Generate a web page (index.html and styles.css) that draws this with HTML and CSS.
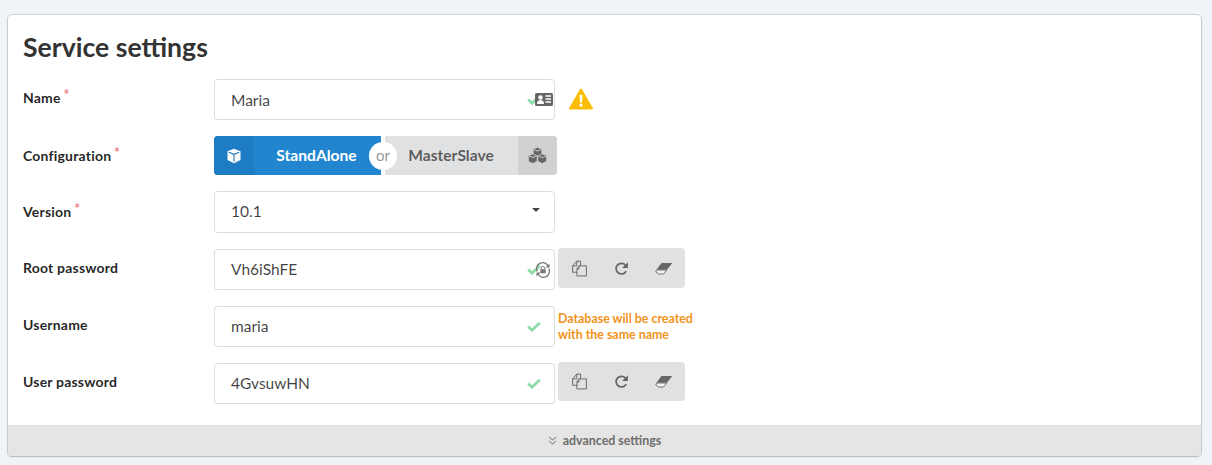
FILE: index.html
```html
<!DOCTYPE html>
<html lang="en">
<head>
<meta charset="utf-8">
<title>Service settings</title>
<link rel="stylesheet" href="styles.css">
</head>
<body>
<svg class="defs" width="0" height="0" aria-hidden="true">
  <symbol id="check" viewBox="0 0 14 11"><path d="M1.200 5.600 5 9.200 12.800 1.800" fill="none" stroke="currentColor" stroke-width="2.800"/></symbol>
  <symbol id="copy" viewBox="0 0 16 16"><path d="M5.500 9.500v-1l2-3h3.500l3.500 0v9.500h-9v-5.500zM7.500 5.500v3h-2M6 11.500h-4.500v-6l4-4.500h3.500v4.500M5.500 1v4.500h-4" fill="none" stroke="currentColor" stroke-width=".9" stroke-linejoin="round"/></symbol>
  <symbol id="redo" viewBox="0 0 16 16"><path d="M13 10.800A5.700 5.700 0 1 1 12.200 4.300" fill="none" stroke="currentColor" stroke-width="1.900"/><path d="M14.800 1.200v6.200h-6.200z" fill="currentColor"/></symbol>
  <symbol id="eraser" viewBox="0 0 18 13"><path d="M6.500 1H17.200l-5.200 6.800H1.500z" fill="currentColor"/><path d="M1.500 8h10.300L8.500 12H3.800L.8 10z" fill="#f4f4f4" stroke="currentColor" stroke-width=".9"/></symbol>
</svg>
<main class="card">
  <h1 class="title">Service settings</h1>
  <form class="form">
    <div class="row row-41">
      <label class="label">Name <sup class="req">*</sup></label>
      <div class="input">
        <span class="value">Maria</span>
        <svg class="check check-near"><use href="#check"/></svg>
        <svg class="idcard" viewBox="0 0 18 13"><rect width="18" height="13" rx="1.500" fill="#666"/><circle cx="5.500" cy="4.500" r="2.200" fill="#fff"/><path d="M2 11c0-3 1.500-4 3.500-4S9 8 9 11z" fill="#fff"/><path d="M10.500 3H16M10.500 6H16M10.500 9H16" stroke="#fff" stroke-width="1.300"/></svg>
      </div>
      <svg class="warn" viewBox="0 0 24 22"><path d="M12 1.500 23 20.500H1z" fill="#fbbd08" stroke="#fbbd08" stroke-width="2" stroke-linejoin="round"/><path d="M10.600 7h2.800l-.4 7.500h-2z" fill="#fff"/><rect x="10.600" y="15.800" width="2.800" height="2.800" fill="#fff"/></svg>
    </div>
    <div class="row row-39">
      <label class="label">Configuration <sup class="req">*</sup></label>
      <div class="toggle">
        <div class="opt opt-on">
          <span class="opt-icon opt-icon-on">
            <svg class="cube" viewBox="0 0 16 16"><path d="M8 .8 14.500 3.300v8.800L8 15.200 1.500 12.100V3.300z" fill="#fff"/><path d="M2.800 4.200 8 6.300l5.200-2.100M8 6.300v7.500" fill="none" stroke="#1a77bd" stroke-width="1.100"/></svg>
          </span>
          <span class="opt-text">StandAlone</span>
        </div>
        <span class="or">or</span>
        <div class="opt opt-off">
          <span class="opt-text">MasterSlave</span>
          <span class="opt-icon opt-icon-off">
            <svg class="cubes" viewBox="0 0 20 18"><g fill="#666" stroke="#d0d1d2" stroke-width=".6" stroke-linejoin="round"><path d="M10 .6 14.500 2.200v5.600L10 9.600 5.500 7.800V2.200z"/><path d="M5 7.400 9.500 9.200v6L5 17.400.5 15.200v-6z"/><path d="M15 7.400 19.500 9.200v6L15 17.400 10.500 15.200v-6z"/></g><path d="M5.800 2.600 10 4.300l4.200-1.700M1 9.500 5 11.200l4-1.700M11 9.500 15 11.200l4-1.700" fill="none" stroke="#d0d1d2" stroke-width="1"/></svg>
          </span>
        </div>
      </div>
    </div>
    <div class="row row-42">
      <label class="label">Version <sup class="req">*</sup></label>
      <div class="input input-up">
        <span class="value">10.1</span>
        <span class="caret"></span>
      </div>
    </div>
    <div class="row row-41">
      <label class="label">Root password</label>
      <div class="input input-up">
        <span class="value">Vh6iShFE</span>
        <svg class="check check-near"><use href="#check"/></svg>
        <svg class="lockspin" viewBox="0 0 16 16"><path d="M2.200 9.500A6 6 0 0 1 13 4" fill="none" stroke="#777" stroke-width="1.300"/><path d="M13.800 6.500A6 6 0 0 1 3 12" fill="none" stroke="#777" stroke-width="1.300"/><path d="M14.500 1.500v4h-4zM1.500 14.500v-4h4z" fill="#777"/><path d="M6.200 7.500V6.300a1.800 1.800 0 0 1 3.600 0v1.200" fill="none" stroke="#777" stroke-width="1"/><rect x="5.300" y="7.300" width="5.400" height="4" rx=".6" fill="#777"/></svg>
      </div>
      <div class="tools tools-40">
        <button class="tool" type="button"><svg class="ic-copy"><use href="#copy"/></svg></button>
        <button class="tool" type="button"><svg class="ic-redo"><use href="#redo"/></svg></button>
        <button class="tool" type="button"><svg class="ic-eraser"><use href="#eraser"/></svg></button>
      </div>
    </div>
    <div class="row row-41">
      <label class="label">Username</label>
      <div class="input input-up">
        <span class="value">maria</span>
        <svg class="check"><use href="#check"/></svg>
      </div>
      <p class="hint">Database will be created<br>with the same name</p>
    </div>
    <div class="row row-41">
      <label class="label">User password</label>
      <div class="input input-up">
        <span class="value">4GvsuwHN</span>
        <svg class="check"><use href="#check"/></svg>
      </div>
      <div class="tools tools-39">
        <button class="tool" type="button"><svg class="ic-copy"><use href="#copy"/></svg></button>
        <button class="tool" type="button"><svg class="ic-redo"><use href="#redo"/></svg></button>
        <button class="tool" type="button"><svg class="ic-eraser"><use href="#eraser"/></svg></button>
      </div>
    </div>
  </form>
  <footer class="advanced">
    <svg class="dbl" viewBox="0 0 9 9"><path d="M1 1l3.500 3L8 1M1 5l3.500 3L8 5" fill="none" stroke="#999" stroke-width="1.200"/></svg>
    <span>advanced settings</span>
  </footer>
</main>
</body>
</html>
```
FILE: styles.css
```css
* { box-sizing: border-box; }
html, body { height: 100%; }
body {
  margin: 0;
  padding: 15px 11px 8px 8px;
  background: #f0f4f8;
  font-family: Lato, "Open Sans", sans-serif;
  color: rgba(0, 0, 0, .87);
  overflow: hidden;
}
.defs { position: absolute; }
.card {
  height: 441px;
  background: #fff;
  border-radius: 4px;
  box-shadow: 0 0 0 1px rgba(34, 36, 38, .15), 0 1px 2px rgba(34, 36, 38, .15);
  overflow: hidden;
  display: flex;
  flex-direction: column;
}
.title {
  margin: 0;
  padding: 16px 0 0 15px;
  height: 64px;
  font-size: 26.600px;
  line-height: 32px;
  font-weight: 700;
  color: #333;
}
.form {
  flex: 1;
  padding-left: 15px;
  display: flex;
  flex-direction: column;
  gap: 16px;
}
.row { display: flex; align-items: center; }
.row-41 { height: 41px; }
.row-39 { height: 39px; }
.row-42 { height: 42px; }
.label {
  width: 191px;
  flex: none;
  padding-bottom: 4px;
  font-size: 14px;
  letter-spacing: .2px;
  font-weight: 700;
  color: rgba(0, 0, 0, .87);
}
.row-39 .label { padding-bottom: 0; }
.row-42 .label { padding-bottom: 2px; }
.req {
  color: #e4686a;
  font-size: 15px;
  font-weight: 400;
  line-height: 0;
  vertical-align: 3px;
  margin-left: -1px;
}
.input {
  width: 341px;
  height: 100%;
  flex: none;
  display: flex;
  align-items: center;
  padding: 0 1px 0 16px;
  border: 1px solid rgba(34, 36, 38, .15);
  border-radius: 4px;
  background: #fff;
}
.value {
  flex: 1;
  font-size: 15.500px;
  color: rgba(0, 0, 0, .75);
}
.input-up .value { padding-bottom: 2px; }
.check { width: 14px; height: 11px; margin-right: 12px; color: #8cdba8; flex: none; }
.check-near { margin-right: -6px; }
.idcard { width: 18px; height: 13px; flex: none; margin-right: 0; }
.lockspin { width: 16px; height: 16px; flex: none; margin-right: 2px; }
.warn { width: 24px; height: 22px; margin: -2px 0 0 14px; flex: none; }
.caret {
  width: 0;
  height: 0;
  margin: 0 13px 4px 0;
  border-left: 4px solid transparent;
  border-right: 4px solid transparent;
  border-top: 4px solid #444;
}
.toggle { position: relative; display: flex; gap: 4px; height: 100%; width: 343px; flex: none; }
.opt { display: flex; align-items: center; height: 100%; font-weight: 700; font-size: 15.600px; }
.opt-on { width: 167px; background: #2185d0; color: #fff; border-radius: 4px 0 0 4px; }
.opt-off { flex: 1; background: #e0e1e2; color: rgba(0, 0, 0, .6); border-radius: 0 4px 4px 0; }
.opt-icon { width: 40px; height: 100%; display: flex; align-items: center; justify-content: center; flex: none; }
.opt-icon-on { background: #1e7cc4; border-radius: 4px 0 0 4px; }
.opt-icon-off { width: 39px; background: #d0d1d2; border-radius: 0 4px 4px 0; }
.opt-text { flex: 1; text-align: center; padding-bottom: 2px; }
.opt-on .opt-text { padding-right: 2px; }
.opt-off .opt-text { padding-right: 1px; }
.cube { width: 16px; height: 16px; }
.cubes { width: 19px; height: 17px; }
.or {
  position: absolute;
  left: 155px;
  top: 6px;
  width: 28px;
  height: 28px;
  border-radius: 50%;
  background: #fff;
  color: rgba(0, 0, 0, .45);
  font-size: 15px;
  font-weight: 400;
  line-height: 27px;
  text-align: center;
}
.tools {
  display: flex;
  flex: none;
  width: 127px;
  margin-left: 3px;
  align-self: flex-start;
  margin-top: -1px;
  background: #e0e1e2;
  border-radius: 4px;
}
.tools-40 { height: 40px; }
.tools-39 { height: 39px; }
.tool {
  flex: 1;
  padding: 0;
  border: 0;
  background: none;
  color: #666;
  display: flex;
  align-items: center;
  justify-content: center;
}
.ic-copy { width: 17px; height: 17px; }
.ic-redo { width: 15px; height: 15px; }
.ic-eraser { width: 18px; height: 13px; }
.hint {
  margin: 0 0 0 3px;
  font-size: 12.400px;
  line-height: 16px;
  font-weight: 700;
  color: #f2941b;
}
.advanced {
  height: 31px;
  flex: none;
  display: flex;
  align-items: center;
  justify-content: center;
  gap: 6px;
  padding-bottom: 2px;
  background: #e5e5e5;
  border-top: 1px solid #ddd;
  font-size: 12.400px;
  font-weight: 700;
  color: #6e6e6e;
}
.dbl { width: 9px; height: 9px; }
```
